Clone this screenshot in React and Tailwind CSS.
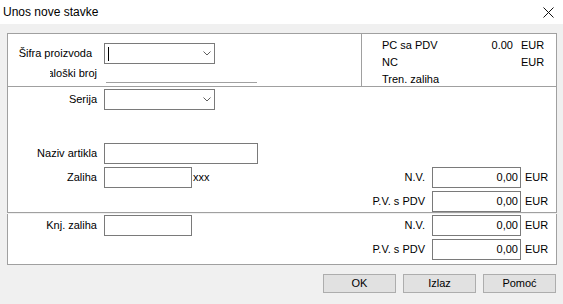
const Chevron = () => (
  <svg width="8" height="5" viewBox="0 0 8 5" className="block">
    <polyline points="0.5,0.5 4,4 7.5,0.5" fill="none" stroke="#5f5f5f" strokeWidth="1" />
  </svg>
);

const Combo = ({ cursor }) => (
  <div className="ml-[7px] w-[111px] h-[21px] border border-[#7a7a7a] bg-white flex items-center justify-between pr-[3px]">
    {cursor ? <span className="ml-[3px] w-px h-[14px] bg-black" /> : <span />}
    <Chevron />
  </div>
);

const Label = ({ children, className = "w-[89px]" }) => (
  <div className={`${className} text-right whitespace-nowrap`}>{children}</div>
);

const MoneyBox = ({ label }) => (
  <div className="ml-auto flex items-center w-[231px]">
    <div className="w-[100px] text-right whitespace-nowrap">{label}</div>
    <div className="ml-[7px] w-[89px] h-[21px] border border-[#7a7a7a] bg-white flex items-center justify-end pr-[2px]">
      0,00
    </div>
    <div className="ml-[4px] w-[31px]">EUR</div>
  </div>
);

export default function App() {
  return (
    <div className="w-[563px] h-[304px] bg-[#f0f0f0] text-black text-[11px] font-['Liberation_Sans',Arial,sans-serif] overflow-hidden">
      {/* title bar */}
      <div className="h-[24px] bg-white flex items-center justify-between pl-[3px] pr-[9px]">
        <span className="text-[12px]">Unos nove stavke</span>
        <svg width="11" height="11" viewBox="0 0 11 11">
          <path d="M0.5 0.5 L10.5 10.5 M10.5 0.5 L0.5 10.5" stroke="#111" strokeWidth="1" fill="none" />
        </svg>
      </div>

      <div className="pl-[7px] pr-[6px] pt-[9px]">
        {/* top section */}
        <div className="h-[54px] border border-[#a0a0a0] bg-white flex">
          <div className="w-[354px] border-r border-[#a0a0a0] pt-[9px]">
            <div className="flex items-center h-[21px]">
              <Label className="w-[84px]">Šifra proizvoda</Label>
              <div className="ml-[5px]" />
              <Combo cursor />
            </div>
            <div className="flex h-[19px]">
              <div className="ml-[42px] w-[47px] overflow-hidden flex justify-end items-center whitespace-nowrap">
                <span className="shrink-0">Kataloški broj</span>
              </div>
              <div className="ml-[9px] w-[151px] border-b border-[#a0a0a0]" />
            </div>
          </div>
          <div className="flex-1 pl-[20px] pt-[3px] leading-[17px]">
            <div className="flex">
              <div className="w-[131px] flex justify-between">
                <span>PC sa PDV</span>
                <span>0.00</span>
              </div>
              <span className="ml-[8px]">EUR</span>
            </div>
            <div className="flex">
              <div className="w-[131px]">NC</div>
              <span className="ml-[8px]">EUR</span>
            </div>
            <div>Tren. zaliha</div>
          </div>
        </div>

        {/* middle section */}
        <div className="h-[126px] border-x border-b border-[#a0a0a0] bg-white pt-[2px]">
          <div className="flex items-center h-[21px]">
            <Label>Serija</Label>
            <Combo />
          </div>
          <div className="flex items-center h-[21px] mt-[33px]">
            <Label>Naziv artikla</Label>
            <div className="ml-[7px] w-[154px] h-[21px] border border-[#7a7a7a] bg-white" />
          </div>
          <div className="flex items-center h-[21px] mt-[3px]">
            <Label>Zaliha</Label>
            <div className="ml-[7px] w-[88px] h-[21px] border border-[#7a7a7a] bg-white" />
            <span className="ml-[1px]">xxx</span>
            <MoneyBox label="N.V." />
          </div>
          <div className="flex items-center h-[21px] mt-[3px]">
            <MoneyBox label="P.V. s PDV" />
          </div>
        </div>

        {/* lower section */}
        <div className="mt-[1px] h-[51px] border-x border-b border-[#a0a0a0] bg-white pt-[1px]">
          <div className="flex items-center h-[21px]">
            <Label>Knj. zaliha</Label>
            <div className="ml-[7px] w-[88px] h-[21px] border border-[#7a7a7a] bg-white" />
            <MoneyBox label="N.V." />
          </div>
          <div className="flex items-center h-[21px] mt-[3px]">
            <MoneyBox label="P.V. s PDV" />
          </div>
        </div>
      </div>

      {/* buttons */}
      <div className="mt-[9px] flex justify-end gap-[7px] pr-[7px]">
        {["OK", "Izlaz", "Pomoć"].map((b) => (
          <button
            key={b}
            className="w-[73px] h-[19px] border border-[#adadad] bg-[#e1e1e1] flex items-center justify-center"
          >
            {b}
          </button>
        ))}
      </div>
    </div>
  );
}
